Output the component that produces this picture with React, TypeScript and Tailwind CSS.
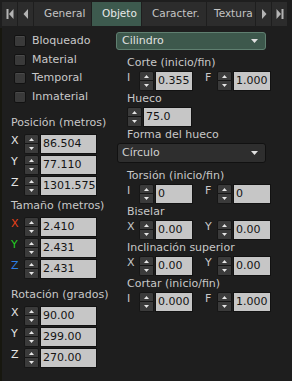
import React from "react";

function NavBtn({ kind }: { kind: "first" | "prev" | "next" | "last" }) {
  return (
    <div className="w-[15px] h-[24px] bg-[#2c2c2c] flex items-center justify-center shrink-0">
      <svg width="8" height="10" viewBox="0 0 8 10">
        {kind === "first" && (
          <>
            <rect x="0.5" y="0" width="2" height="10" fill="#b4b4b4" />
            <path d="M7.5 0 L3 5 L7.5 10 Z" fill="#b4b4b4" />
          </>
        )}
        {kind === "prev" && <path d="M6 0 L1.5 5 L6 10 Z" fill="#b4b4b4" />}
        {kind === "next" && <path d="M2 0 L6.5 5 L2 10 Z" fill="#b4b4b4" />}
        {kind === "last" && (
          <>
            <path d="M0.5 0 L5 5 L0.5 10 Z" fill="#b4b4b4" />
            <rect x="5.5" y="0" width="2" height="10" fill="#b4b4b4" />
          </>
        )}
      </svg>
    </div>
  );
}

function Tab({ label, w, active }: { label: string; w: string; active?: boolean }) {
  return (
    <div
      className={
        active
          ? `${w} h-[24px] bg-[#3d5a4e] text-[#e8e8e8] text-[10.5px] pl-[10px] flex items-center shrink-0 overflow-hidden whitespace-nowrap`
          : `${w} h-[24px] bg-[#2c2c2c] text-[#c4c4c4] text-[10.5px] pl-[10px] flex items-center shrink-0 overflow-hidden whitespace-nowrap`
      }
    >
      {label}
    </div>
  );
}

function TabBar() {
  return (
    <div className="h-[28px] flex items-start pt-[2px] pl-[2px] gap-[1px] bg-[#1e1e1e]">
      <NavBtn kind="first" />
      <NavBtn kind="prev" />
      <Tab label="General" w="w-[57px]" />
      <Tab label="Objeto" w="w-[49px]" active />
      <Tab label="Caracter." w="w-[64px]" />
      <div className="w-[48px] h-[24px] bg-[#2c2c2c] text-[#c4c4c4] text-[10.5px] pl-[7px] flex items-center shrink-0 overflow-hidden whitespace-nowrap">
        Textura
      </div>
      <NavBtn kind="next" />
      <NavBtn kind="last" />
    </div>
  );
}

function Check({ label }: { label: string }) {
  return (
    <div className="h-[18.5px] flex items-center">
      <div className="w-[12px] h-[12px] bg-[#3a3a3a] border border-[#121212] rounded-[2px] shadow-[inset_0_1px_0_#4a4a4a]" />
      <span className="ml-[6px] text-[11px] text-[#c8c8c8]">{label}</span>
    </div>
  );
}

function Spin() {
  return (
    <div className="w-[15px] h-[20px] flex flex-col shrink-0">
      <div className="h-[10px] bg-[#3b3b3b] border border-[#161616] rounded-t-[2px] flex items-center justify-center">
        <svg width="5" height="3" viewBox="0 0 5 3">
          <path d="M0 3 L2.5 0 L5 3 Z" fill="#e6e6e6" />
        </svg>
      </div>
      <div className="h-[10px] bg-[#3b3b3b] border border-t-0 border-[#161616] rounded-b-[2px] flex items-center justify-center">
        <svg width="5" height="3" viewBox="0 0 5 3">
          <path d="M0 0 L5 0 L2.5 3 Z" fill="#e6e6e6" />
        </svg>
      </div>
    </div>
  );
}

function Field({ value, w }: { value: string; w: string }) {
  return (
    <div
      className={`${w} h-[20px] ml-[1px] bg-[#c6c6c6] border border-[#121212] text-[11px] text-[#141414] pl-[2px] leading-[18px] whitespace-nowrap overflow-hidden shrink-0`}
    >
      {value}
    </div>
  );
}

function AxisRow({ axis, value, color }: { axis: string; value: string; color: string }) {
  return (
    <div className="h-[20px] flex items-center">
      <span className={`w-[13px] text-[11px] leading-[14px] self-start ${color}`}>{axis}</span>
      <Spin />
      <Field value={value} w="w-[57px]" />
    </div>
  );
}

function SecLabel({ children, mt }: { children: React.ReactNode; mt: string }) {
  return (
    <div className={`${mt} mb-[3px] h-[16px] leading-[16px] text-[11px] text-[#c8c8c8] whitespace-nowrap`}>
      {children}
    </div>
  );
}

function LeftCol() {
  return (
    <div className="w-[116px] shrink-0 flex flex-col">
      <div className="mt-[4px] pl-[14px] flex flex-col">
        <Check label="Bloqueado" />
        <Check label="Material" />
        <Check label="Temporal" />
        <Check label="Inmaterial" />
      </div>
      <div className="pl-[11px] flex flex-col">
        <SecLabel mt="mt-[9px]">Posición (metros)</SecLabel>
        <div className="flex flex-col gap-[1px]">
          <AxisRow axis="X" value="86.504" color="text-[#e4e4e4]" />
          <AxisRow axis="Y" value="77.110" color="text-[#e4e4e4]" />
          <AxisRow axis="Z" value="1301.575" color="text-[#e4e4e4]" />
        </div>
        <SecLabel mt="mt-[2px]">Tamaño (metros)</SecLabel>
        <div className="flex flex-col gap-[1px]">
          <AxisRow axis="X" value="2.410" color="text-[#e8411a]" />
          <AxisRow axis="Y" value="2.431" color="text-[#22d022]" />
          <AxisRow axis="Z" value="2.431" color="text-[#2c7fe6]" />
        </div>
        <SecLabel mt="mt-[8px]">Rotación (grados)</SecLabel>
        <div className="flex flex-col gap-[1px]">
          <AxisRow axis="X" value="90.00" color="text-[#e4e4e4]" />
          <AxisRow axis="Y" value="299.00" color="text-[#e4e4e4]" />
          <AxisRow axis="Z" value="270.00" color="text-[#e4e4e4]" />
        </div>
      </div>
    </div>
  );
}

function RLabel({ children, mt }: { children: React.ReactNode; mt?: string }) {
  return (
    <div className={`${mt ?? ""} pl-[11px] h-[16px] leading-[16px] text-[11px] text-[#c8c8c8] whitespace-nowrap`}>
      {children}
    </div>
  );
}

function PairRow({ a, b, va, vb }: { a: string; b: string; va: string; vb: string }) {
  return (
    <div className="h-[20px] flex items-center pl-[11px]">
      <span className="w-[12px] text-[11px] leading-[14px] self-start text-[#c8c8c8]">{a}</span>
      <Spin />
      <Field value={va} w="w-[38px]" />
      <span className="ml-[12px] w-[12px] text-[11px] leading-[14px] self-start text-[#c8c8c8]">{b}</span>
      <Spin />
      <Field value={vb} w="w-[38px]" />
    </div>
  );
}

function Caret() {
  return (
    <svg width="7" height="4" viewBox="0 0 7 4">
      <path d="M0 0 L7 0 L3.5 4 Z" fill="#e0e0e0" />
    </svg>
  );
}

function RightCol() {
  return (
    <div className="flex-1 flex flex-col">
      <div className="mt-[4px] w-[150px] h-[18px] bg-[#3d584c] border border-[#5f7f70] rounded-[3px] flex items-center justify-between pl-[5px] pr-[7px] text-[11px] text-[#e0e0e0]">
        <span>Cilindro</span>
        <Caret />
      </div>
      <RLabel mt="mt-[5px]">Corte (inicio/fin)</RLabel>
      <PairRow a="I" b="F" va="0.355" vb="1.000" />
      <RLabel>Hueco</RLabel>
      <div className="h-[20px] flex items-center pl-[11px]">
        <Spin />
        <Field value="75.0" w="w-[49px]" />
      </div>
      <RLabel>Forma del hueco</RLabel>
      <div className="ml-[1px] w-[149px] h-[20px] bg-[#2e2e2e] border border-[#111111] rounded-[3px] flex items-center justify-between pl-[4px] pr-[7px] text-[11px] text-[#d0d0d0]">
        <span>Círculo</span>
        <Caret />
      </div>
      <RLabel mt="mt-[5px]">Torsión (inicio/fin)</RLabel>
      <PairRow a="I" b="F" va="0" vb="0" />
      <RLabel>Biselar</RLabel>
      <PairRow a="X" b="Y" va="0.00" vb="0.00" />
      <RLabel>Inclinación superior</RLabel>
      <PairRow a="X" b="Y" va="0.00" vb="0.00" />
      <RLabel>Cortar (inicio/fin)</RLabel>
      <PairRow a="I" b="F" va="0.000" vb="1.000" />
    </div>
  );
}

export default function App() {
  return (
    <div className="w-[292px] h-[381px] bg-[#1e1e1e] flex overflow-hidden font-['DejaVu_Sans',sans-serif]">
      <div className="w-[2px] shrink-0 bg-[#17170f]" />
      <div className="flex-1 flex flex-col -ml-[2px]">
        <TabBar />
        <div className="flex">
          <LeftCol />
          <RightCol />
        </div>
      </div>
    </div>
  );
}
